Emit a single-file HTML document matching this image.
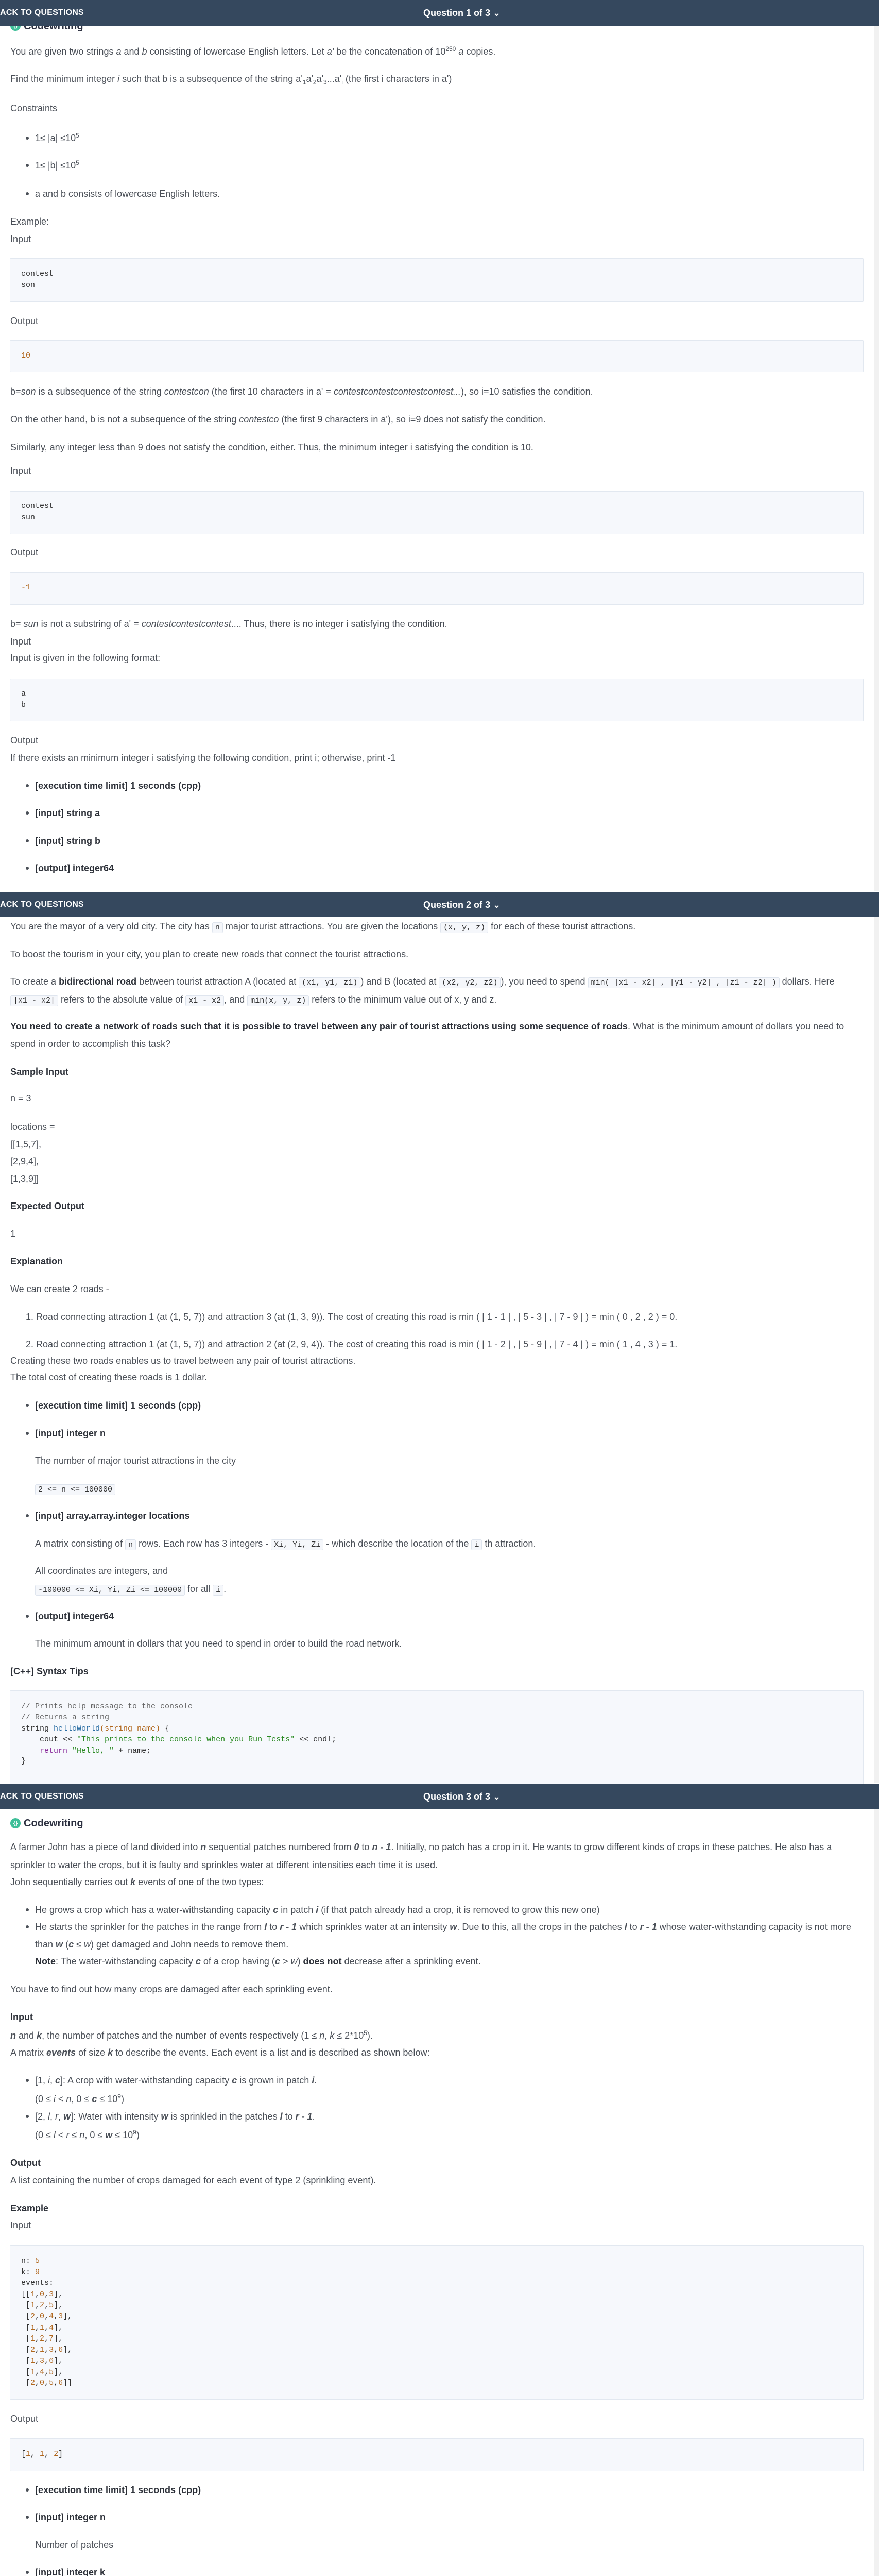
<!DOCTYPE html>
<html><head><meta charset="utf-8"><style>
*{margin:0;padding:0;box-sizing:border-box}
html,body{width:1707px;height:5192px;overflow:hidden}
body{position:relative;background:#fff;font-family:"Liberation Sans",Arial,sans-serif;font-size:18px;color:#4a4f57}
.l{position:absolute;left:20px;line-height:20px;white-space:nowrap}
.i{left:68px}
.b{font-weight:bold;color:#2c3038}
.dot{position:absolute;left:50px;width:6px;height:6px;border-radius:50%;background:#4a4f57}
.hdr{position:absolute;left:0;width:1707px;background:#35485e;color:#fff;z-index:5;font-weight:bold}
.hdr .bk{position:absolute;left:0;font-size:16px;letter-spacing:0.2px}
.hdr .q{position:absolute;left:822px;font-size:18px}
.box{position:absolute;left:19px;width:1658px;background:#f6f8fc;border:1px solid #e2e8f0;border-radius:2px}
.cl{position:absolute;left:41px;font-family:"Liberation Mono",monospace;font-size:15px;line-height:20px;white-space:pre;color:#333}
.c{font-family:"Liberation Mono",monospace;font-size:15px;background:#f5f7fb;border:1px solid #dfe5ee;border-radius:3px;padding:1px 5px;color:#333}
.o{color:#b0661c}
.cm{color:#666}
.fn{color:#2b6ea3}
.st{color:#2a8a22}
.kw{color:#8b2e9c}
.ic{position:absolute;left:20px;width:20px;height:20px;border-radius:50%;background:#3fbf99;color:#fff;font-size:11px;font-weight:bold;text-align:center;line-height:20px}
.cw{position:absolute;left:46px;font-weight:bold;font-size:20px;color:#2c3040;line-height:22px}
sup,sub{font-size:12px;line-height:0}
.sb{position:absolute;left:1697px;width:10px;background:#f1f1f1}
</style></head><body>

<div class="sb" style="top:50px;height:1680px"></div>
<div class="sb" style="top:1780px;height:1680px"></div>
<div class="sb" style="top:3512px;height:1680px"></div>

<!-- Q1 -->
<div class="hdr" style="top:0;height:50px"><span class="bk" style="top:16px">ACK TO QUESTIONS</span><span class="q" style="top:15px">Question 1 of 3 ⌄</span></div>
<div class="ic" style="top:40px">{}</div><div class="cw" style="top:40px">Codewriting</div>
<div class="l" style="top:90px">You are given two strings <i>a</i> and <i>b</i> consisting of lowercase English letters. Let <i>a'</i> be the concatenation of 10<sup>250</sup> <i>a</i> copies.</div>
<div class="l" style="top:143px">Find the minimum integer <i>i</i> such that b is a subsequence of the string a'<sub>1</sub>a'<sub>2</sub>a'<sub>3</sub>...a'<sub>i</sub> (the first i characters in a')</div>
<div class="l" style="top:200px">Constraints</div>
<div class="dot" style="top:265px"></div><div class="l i" style="top:258px">1≤ |a| ≤10<sup>5</sup></div>
<div class="dot" style="top:318px"></div><div class="l i" style="top:311px">1≤ |b| ≤10<sup>5</sup></div>
<div class="dot" style="top:373px"></div><div class="l i" style="top:366px">a and b consists of lowercase English letters.</div>
<div class="l" style="top:420px">Example:</div>
<div class="l" style="top:454px">Input</div>
<div class="box" style="top:501px;height:85px"></div>
<div class="cl" style="top:522px">contest</div><div class="cl" style="top:544px">son</div>
<div class="l" style="top:613px">Output</div>
<div class="box" style="top:660px;height:63px"></div>
<div class="cl o" style="top:681px">10</div>
<div class="l" style="top:750px">b=<i>son</i> is a subsequence of the string <i>contestcon</i> (the first 10 characters in a' = <i>contestcontestcontestcontest...</i>), so i=10 satisfies the condition.</div>
<div class="l" style="top:804px">On the other hand, b is not a subsequence of the string <i>contestco</i> (the first 9 characters in a'), so i=9 does not satisfy the condition.</div>
<div class="l" style="top:858px">Similarly, any integer less than 9 does not satisfy the condition, either. Thus, the minimum integer i satisfying the condition is 10.</div>
<div class="l" style="top:904px">Input</div>
<div class="box" style="top:953px;height:84px"></div>
<div class="cl" style="top:973px">contest</div><div class="cl" style="top:995px">sun</div>
<div class="l" style="top:1062px">Output</div>
<div class="box" style="top:1111px;height:63px"></div>
<div class="cl o" style="top:1131px">-1</div>
<div class="l" style="top:1201px">b= <i>sun</i> is not a substring of a' = <i>contestcontestcontest</i>.... Thus, there is no integer i satisfying the condition.</div>
<div class="l" style="top:1235px">Input</div>
<div class="l" style="top:1267px">Input is given in the following format:</div>
<div class="box" style="top:1317px;height:83px"></div>
<div class="cl" style="top:1337px">a</div><div class="cl" style="top:1359px">b</div>
<div class="l" style="top:1427px">Output</div>
<div class="l" style="top:1461px">If there exists an minimum integer i satisfying the following condition, print i; otherwise, print -1</div>
<div class="dot" style="top:1522px"></div><div class="l i b" style="top:1515px">[execution time limit] 1 seconds (cpp)</div>
<div class="dot" style="top:1575px"></div><div class="l i b" style="top:1568px">[input] string a</div>
<div class="dot" style="top:1629px"></div><div class="l i b" style="top:1622px">[input] string b</div>
<div class="dot" style="top:1682px"></div><div class="l i b" style="top:1675px">[output] integer64</div>

<!-- Q2 -->
<div class="hdr" style="top:1731px;height:49px"><span class="bk" style="top:16px">ACK TO QUESTIONS</span><span class="q" style="top:15px">Question 2 of 3 ⌄</span></div>
<div class="l" style="top:1788px">You are the mayor of a very old city. The city has <span class="c">n</span> major tourist attractions. You are given the locations <span class="c">(x, y, z)</span> for each of these tourist attractions.</div>
<div class="l" style="top:1842px">To boost the tourism in your city, you plan to create new roads that connect the tourist attractions.</div>
<div class="l" style="top:1895px">To create a <b class="b">bidirectional road</b> between tourist attraction A (located at <span class="c">(x1, y1, z1)</span>) and B (located at <span class="c">(x2, y2, z2)</span>), you need to spend <span class="c">min( |x1 - x2| , |y1 - y2| , |z1 - z2| )</span> dollars. Here</div>
<div class="l" style="top:1930px"><span class="c">|x1 - x2|</span> refers to the absolute value of <span class="c">x1 - x2</span>, and <span class="c">min(x, y, z)</span> refers to the minimum value out of x, y and z.</div>
<div class="l" style="top:1982px"><b class="b">You need to create a network of roads such that it is possible to travel between any pair of tourist attractions using some sequence of roads</b>. What is the minimum amount of dollars you need to</div>
<div class="l" style="top:2016px">spend in order to accomplish this task?</div>
<div class="l b" style="top:2070px">Sample Input</div>
<div class="l" style="top:2122px">n = 3</div>
<div class="l" style="top:2177px">locations =</div>
<div class="l" style="top:2211px">[[1,5,7],</div>
<div class="l" style="top:2244px">[2,9,4],</div>
<div class="l" style="top:2278px">[1,3,9]]</div>
<div class="l b" style="top:2331px">Expected Output</div>
<div class="l" style="top:2385px">1</div>
<div class="l b" style="top:2438px">Explanation</div>
<div class="l" style="top:2492px">We can create 2 roads -</div>
<div class="l" style="top:2546px;left:50px">1. Road connecting attraction 1 (at (1, 5, 7)) and attraction 3 (at (1, 3, 9)). The cost of creating this road is min ( | 1 - 1 | , | 5 - 3 | , | 7 - 9 | ) = min ( 0 , 2 , 2 ) = 0.</div>
<div class="l" style="top:2599px;left:50px">2. Road connecting attraction 1 (at (1, 5, 7)) and attraction 2 (at (2, 9, 4)). The cost of creating this road is min ( | 1 - 2 | , | 5 - 9 | , | 7 - 4 | ) = min ( 1 , 4 , 3 ) = 1.</div>
<div class="l" style="top:2631px">Creating these two roads enables us to travel between any pair of tourist attractions.</div>
<div class="l" style="top:2663px">The total cost of creating these roads is 1 dollar.</div>
<div class="dot" style="top:2725px"></div><div class="l i b" style="top:2718px">[execution time limit] 1 seconds (cpp)</div>
<div class="dot" style="top:2779px"></div><div class="l i b" style="top:2772px">[input] integer n</div>
<div class="l i" style="top:2825px">The number of major tourist attractions in the city</div>
<div class="l i" style="top:2879px"><span class="c">2 &lt;= n &lt;= 100000</span></div>
<div class="dot" style="top:2939px"></div><div class="l i b" style="top:2932px">[input] array.array.integer locations</div>
<div class="l i" style="top:2986px">A matrix consisting of <span class="c">n</span> rows. Each row has 3 integers - <span class="c">Xi, Yi, Zi</span> - which describe the location of the <span class="c">i</span> th attraction.</div>
<div class="l i" style="top:3039px">All coordinates are integers, and</div>
<div class="l i" style="top:3074px"><span class="c">-100000 &lt;= Xi, Yi, Zi &lt;= 100000</span> for all <span class="c">i</span>.</div>
<div class="dot" style="top:3134px"></div><div class="l i b" style="top:3127px">[output] integer64</div>
<div class="l i" style="top:3180px">The minimum amount in dollars that you need to spend in order to build the road network.</div>
<div class="l b" style="top:3234px">[C++] Syntax Tips</div>
<div class="box" style="top:3281px;height:190px"></div>
<div class="cl cm" style="top:3303px">// Prints help message to the console</div>
<div class="cl cm" style="top:3324px">// Returns a string</div>
<div class="cl" style="top:3346px">string <span class="fn">helloWorld</span><span class="o">(string name)</span> {</div>
<div class="cl" style="top:3367px">    cout &lt;&lt; <span class="st">"This prints to the console when you Run Tests"</span> &lt;&lt; endl;</div>
<div class="cl" style="top:3389px">    <span class="kw">return</span> <span class="st">"Hello, "</span> + name;</div>
<div class="cl" style="top:3409px">}</div>

<!-- Q3 -->
<div class="hdr" style="top:3462px;height:50px"><span class="bk" style="top:16px">ACK TO QUESTIONS</span><span class="q" style="top:15px">Question 3 of 3 ⌄</span></div>
<div class="ic" style="top:3529px">{}</div><div class="cw" style="top:3528px">Codewriting</div>
<div class="l" style="top:3575px">A farmer John has a piece of land divided into <b><i>n</i></b> sequential patches numbered from <b><i>0</i></b> to <b><i>n - 1</i></b>. Initially, no patch has a crop in it. He wants to grow different kinds of crops in these patches. He also has a</div>
<div class="l" style="top:3610px">sprinkler to water the crops, but it is faulty and sprinkles water at different intensities each time it is used.</div>
<div class="l" style="top:3643px">John sequentially carries out <b><i>k</i></b> events of one of the two types:</div>
<div class="dot" style="top:3704px"></div><div class="l i" style="top:3697px">He grows a crop which has a water-withstanding capacity <b><i>c</i></b> in patch <b><i>i</i></b> (if that patch already had a crop, it is removed to grow this new one)</div>
<div class="dot" style="top:3737px"></div><div class="l i" style="top:3730px">He starts the sprinkler for the patches in the range from <b><i>l</i></b> to <b><i>r - 1</i></b> which sprinkles water at an intensity <b><i>w</i></b>. Due to this, all the crops in the patches <b><i>l</i></b> to <b><i>r - 1</i></b> whose water-withstanding capacity is not more</div>
<div class="l i" style="top:3764px">than <b><i>w</i></b> (<b><i>c</i></b> ≤ <i>w</i>) get damaged and John needs to remove them.</div>
<div class="l i" style="top:3797px"><b class="b">Note</b>: The water-withstanding capacity <b><i>c</i></b> of a crop having (<b><i>c</i></b> &gt; <i>w</i>) <b class="b">does not</b> decrease after a sprinkling event.</div>
<div class="l" style="top:3851px">You have to find out how many crops are damaged after each sprinkling event.</div>
<div class="l b" style="top:3905px">Input</div>
<div class="l" style="top:3941px"><b><i>n</i></b> and <b><i>k</i></b>, the number of patches and the number of events respectively (1 ≤ <i>n</i>, <i>k</i> ≤ 2*10<sup>5</sup>).</div>
<div class="l" style="top:3974px">A matrix <b><i>events</i></b> of size <b><i>k</i></b> to describe the events. Each event is a list and is described as shown below:</div>
<div class="dot" style="top:4035px"></div><div class="l i" style="top:4028px">[1, <i>i</i>, <b><i>c</i></b>]: A crop with water-withstanding capacity <b><i>c</i></b> is grown in patch <b><i>i</i></b>.</div>
<div class="l i" style="top:4064px">(0 ≤ <i>i</i> &lt; <i>n</i>, 0 ≤ <b><i>c</i></b> ≤ 10<sup>9</sup>)</div>
<div class="dot" style="top:4105px"></div><div class="l i" style="top:4098px">[2, <i>l</i>, <i>r</i>, <b><i>w</i></b>]: Water with intensity <b><i>w</i></b> is sprinkled in the patches <b><i>l</i></b> to <b><i>r - 1</i></b>.</div>
<div class="l i" style="top:4134px">(0 ≤ <i>l</i> &lt; <i>r</i> ≤ <i>n</i>, 0 ≤ <b><i>w</i></b> ≤ 10<sup>9</sup>)</div>
<div class="l b" style="top:4188px">Output</div>
<div class="l" style="top:4222px">A list containing the number of crops damaged for each event of type 2 (sprinkling event).</div>
<div class="l b" style="top:4276px">Example</div>
<div class="l" style="top:4309px">Input</div>
<div class="box" style="top:4358px;height:300px"></div>
<div class="cl" style="top:4379px">n: <span class="o">5</span></div>
<div class="cl" style="top:4401px">k: <span class="o">9</span></div>
<div class="cl" style="top:4422px">events:</div>
<div class="cl" style="top:4444px">[[<span class="o">1</span>,<span class="o">0</span>,<span class="o">3</span>],</div>
<div class="cl" style="top:4465px"> [<span class="o">1</span>,<span class="o">2</span>,<span class="o">5</span>],</div>
<div class="cl" style="top:4487px"> [<span class="o">2</span>,<span class="o">0</span>,<span class="o">4</span>,<span class="o">3</span>],</div>
<div class="cl" style="top:4509px"> [<span class="o">1</span>,<span class="o">1</span>,<span class="o">4</span>],</div>
<div class="cl" style="top:4530px"> [<span class="o">1</span>,<span class="o">2</span>,<span class="o">7</span>],</div>
<div class="cl" style="top:4552px"> [<span class="o">2</span>,<span class="o">1</span>,<span class="o">3</span>,<span class="o">6</span>],</div>
<div class="cl" style="top:4573px"> [<span class="o">1</span>,<span class="o">3</span>,<span class="o">6</span>],</div>
<div class="cl" style="top:4595px"> [<span class="o">1</span>,<span class="o">4</span>,<span class="o">5</span>],</div>
<div class="cl" style="top:4616px"> [<span class="o">2</span>,<span class="o">0</span>,<span class="o">5</span>,<span class="o">6</span>]]</div>
<div class="l" style="top:4685px">Output</div>
<div class="box" style="top:4733px;height:64px"></div>
<div class="cl" style="top:4754px">[<span class="o">1</span>, <span class="o">1</span>, <span class="o">2</span>]</div>
<div class="dot" style="top:4830px"></div><div class="l i b" style="top:4823px">[execution time limit] 1 seconds (cpp)</div>
<div class="dot" style="top:4883px"></div><div class="l i b" style="top:4876px">[input] integer n</div>
<div class="l i" style="top:4929px">Number of patches</div>
<div class="dot" style="top:4990px"></div><div class="l i b" style="top:4983px">[input] integer k</div>
<div class="l i" style="top:5036px">Number of events</div>
<div class="dot" style="top:5098px"></div><div class="l i b" style="top:5091px">[input] array.array.integer events</div>
<div class="l i" style="top:5144px">Matrix of events with each item as an array of event</div>

</body></html>
